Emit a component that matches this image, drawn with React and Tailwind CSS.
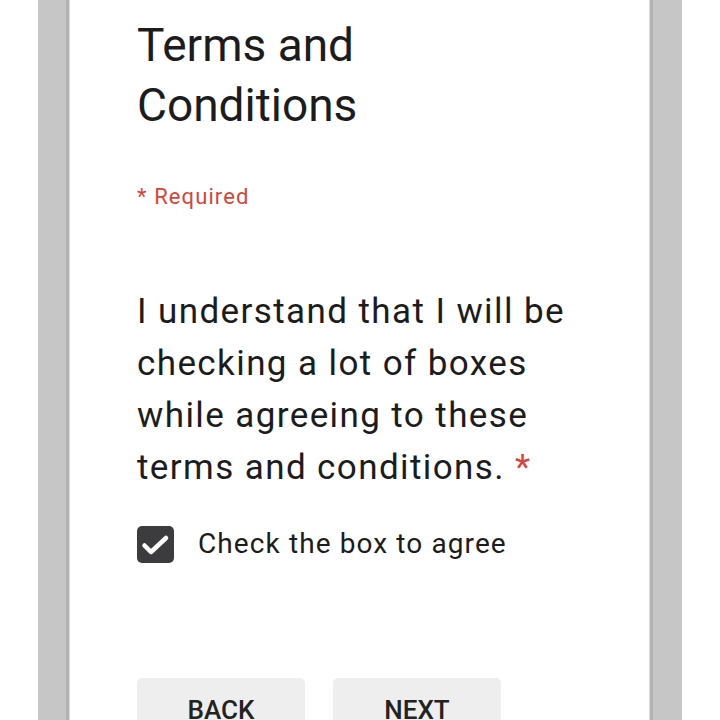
export default function App() {
  return (
    <div className="flex h-[720px] w-[720px] overflow-hidden bg-white font-['Roboto',sans-serif]">
      <div className="w-[38px] shrink-0 bg-white" />
      <div className="flex w-[32px] shrink-0 bg-[#c6c6c6]">
        <div className="flex-1" />
        <div className="w-[3px] bg-[#b3b3b3]" />
        <div className="w-[1px] bg-[#dcdcdc]" />
      </div>

      <main className="flex w-[579px] shrink-0 flex-col bg-white pl-[67px] pr-[44px] pt-[15px] text-[#1c1c1c]">
        <h1 className="text-[46px] leading-[60px] font-normal">
          Terms and
          <br />
          Conditions
        </h1>

        <p className="mt-[48px] text-[22px] leading-[28px] tracking-[1.1px] text-[#d2463c]">* Required</p>

        <p className="mt-[75px] text-[35px] leading-[52px] tracking-[1.4px]">
          I understand that I will be checking a lot of boxes while agreeing to these terms and conditions.{' '}
          <span className="text-[#d2463c]">*</span>
        </p>

        <label className="mt-[30px] flex items-center gap-[24px]">
          <span className="flex h-[37px] w-[37px] shrink-0 rounded-[5px] bg-[#3c3b3d]">
            <svg viewBox="0 0 37 37" className="h-[37px] w-[37px]" fill="none" stroke="white" strokeWidth="4.5" strokeLinecap="round" strokeLinejoin="round">
              <path d="M7.5 19.5L14 26L29 12" />
            </svg>
          </span>
          <span className="text-[28px] leading-[40px] tracking-[1.1px]">Check the box to agree</span>
        </label>

        <div className="mt-[114px] flex gap-[28px]">
          <button className="h-[64px] w-[168px] rounded-[5px] bg-[#eeeeee] text-[26px] font-medium text-[#222]">BACK</button>
          <button className="h-[64px] w-[168px] rounded-[5px] bg-[#eeeeee] text-[26px] font-medium text-[#222]">NEXT</button>
        </div>
      </main>

      <div className="flex w-[33px] shrink-0 bg-[#c6c6c6]">
        <div className="w-[1px] bg-[#dcdcdc]" />
        <div className="w-[3px] bg-[#b3b3b3]" />
        <div className="flex-1" />
      </div>
      <div className="flex-1 bg-white" />
    </div>
  );
}
